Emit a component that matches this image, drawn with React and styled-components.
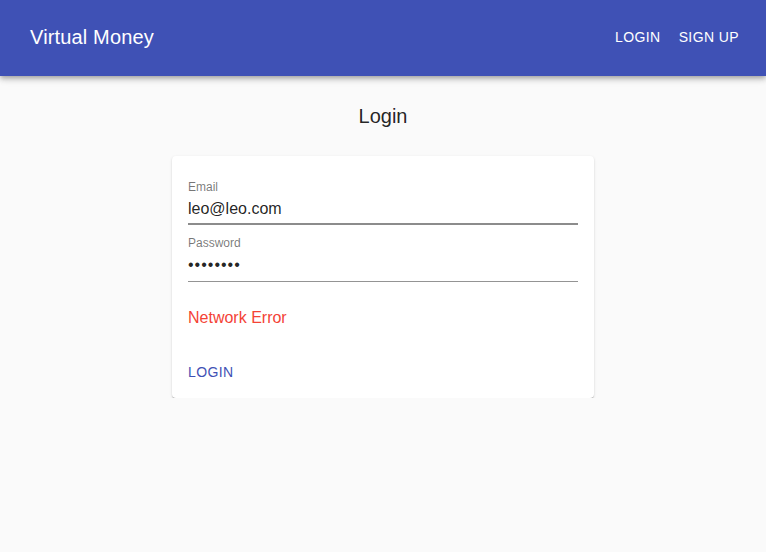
import React from "react";
import styled, { createGlobalStyle } from "styled-components";

const GlobalStyle = createGlobalStyle`
  body {
    margin: 0;
    background: #fafafa;
    font-family: "Liberation Sans", Arial, sans-serif;
  }
`;

const AppBar = styled.header`
  height: 76px;
  box-sizing: border-box;
  background: #3f51b5;
  color: #fff;
  display: flex;
  align-items: center;
  padding: 0 19px 2px 30px;
  box-shadow: 0 2px 4px -1px rgba(0, 0, 0, 0.2), 0 4px 5px 0 rgba(0, 0, 0, 0.14),
    0 1px 10px 0 rgba(0, 0, 0, 0.12);
  position: relative;
`;

const Title = styled.h1`
  flex: 1;
  margin: 0;
  font-size: 20px;
  font-weight: 400;
  line-height: 24px;
  letter-spacing: 0.15px;
`;

const NavButton = styled.button`
  background: none;
  border: 0;
  color: ${(p) => p.$color || "#fff"};
  font-family: inherit;
  font-size: 14px;
  letter-spacing: 0.4px;
  text-transform: uppercase;
  height: 36px;
  padding: 0 8px;
  border-radius: 4px;
  cursor: pointer;
`;

const Nav = styled.nav`
  display: flex;
  gap: 2px;
`;

const Main = styled.main`
  display: flex;
  flex-direction: column;
  align-items: center;
`;

const Heading = styled.h2`
  margin: 28px 0 28px;
  font-size: 20px;
  font-weight: 400;
  line-height: 24px;
  color: rgba(0, 0, 0, 0.87);
`;

const Card = styled.div`
  width: 422px;
  background: #fff;
  border-radius: 4px;
  box-shadow: 0 2px 1px -1px rgba(0, 0, 0, 0.2), 0 1px 1px 0 rgba(0, 0, 0, 0.14),
    0 1px 3px 0 rgba(0, 0, 0, 0.12);
`;

const CardContent = styled.div`
  padding: 16px 16px 19px;
`;

const Field = styled.div`
  margin-top: ${(p) => p.$top}px;
  display: flex;
  flex-direction: column;
`;

const Label = styled.label`
  font-size: 12px;
  line-height: 14px;
  color: rgba(0, 0, 0, 0.54);
`;

const Input = styled.input`
  border: 0;
  outline: none;
  font-family: inherit;
  font-size: 16px;
  line-height: 19px;
  height: 19px;
  color: rgba(0, 0, 0, 0.87);
  padding: 5px 0 ${(p) => (p.$active ? 5 : 7)}px;
  border-bottom: ${(p) => (p.$active ? "2px solid #8c8c8c" : "1px solid #949494")};
  background: transparent;
  letter-spacing: ${(p) => (p.type === "password" ? "1px" : "0")};
`;

const ErrorText = styled.p`
  margin: 26px 0 0;
  font-size: 16px;
  line-height: 19px;
  color: #f44336;
`;

const CardActions = styled.div`
  padding: 8px;
  display: flex;
`;

export default function App() {
  return (
    <>
      <GlobalStyle />
      <AppBar>
        <Title>Virtual Money</Title>
        <Nav>
          <NavButton>Login</NavButton>
          <NavButton>Sign up</NavButton>
        </Nav>
      </AppBar>
      <Main>
        <Heading>Login</Heading>
        <Card>
          <CardContent>
            <Field $top={8}>
              <Label>Email</Label>
              <Input $active type="text" defaultValue="leo@leo.com" />
            </Field>
            <Field $top={11}>
              <Label>Password</Label>
              <Input type="password" defaultValue="12345678" />
            </Field>
            <ErrorText>Network Error</ErrorText>
          </CardContent>
          <CardActions>
            <NavButton $color="#3f51b5">Login</NavButton>
          </CardActions>
        </Card>
      </Main>
    </>
  );
}
